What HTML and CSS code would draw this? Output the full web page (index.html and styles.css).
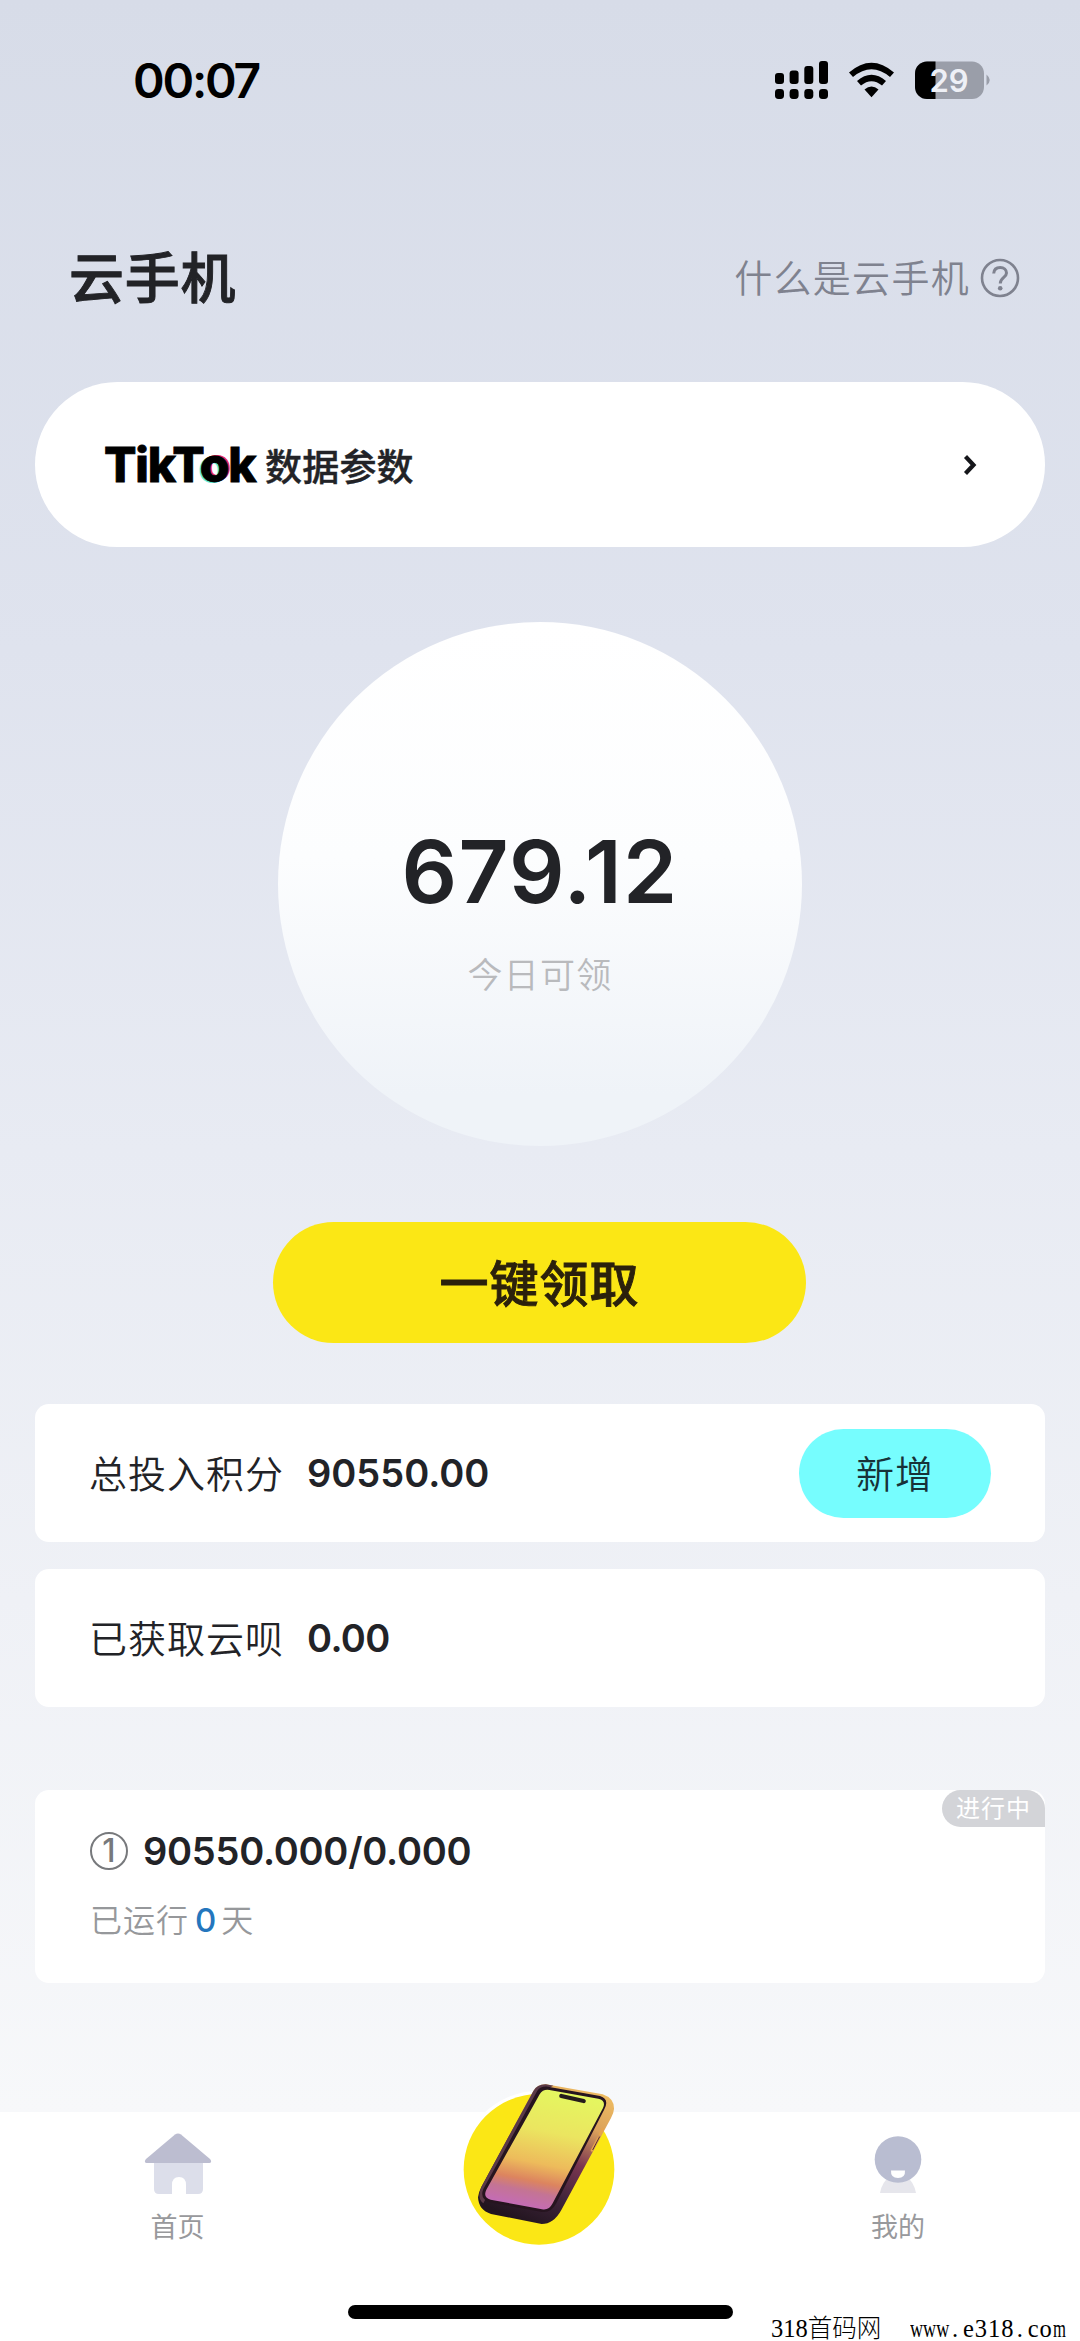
FILE: index.html
```html
<!DOCTYPE html>
<html lang="zh-CN">
<head>
<meta charset="UTF-8">
<title>云手机</title>
<link rel="stylesheet" href="styles.css">
</head>
<body>
<div class="screen">
  <header class="status">
    <span class="time">00:07</span>
    <svg class="status-icons" width="220" height="44" viewBox="0 0 220 44">
      <g>
        <rect x="0" y="13" width="9" height="11" rx="3"/><rect x="14.6" y="10.5" width="9" height="13.5" rx="3"/><rect x="29.3" y="6" width="9" height="18" rx="3"/><rect x="44" y="1" width="9" height="23" rx="3"/>
        <rect x="0" y="29" width="9" height="10" rx="3.4"/><rect x="14.6" y="29" width="9" height="10" rx="3.4"/><rect x="29.3" y="29" width="9" height="10" rx="3.4"/><rect x="44" y="29" width="9" height="10" rx="3.4"/>
      </g>
      <g>
        <path d="M74 12.5Q96.500 -7 119 12.500L115 17Q96.500 1.500 78 17Z"/>
        <path d="M82 21Q96.500 8.500 111 21L107 25.500Q96.500 17 86 25.500Z"/>
        <path d="M89.500 29.500Q96.500 23.500 103.500 29.500L96.500 37.300Z"/>
      </g>
      <clipPath id="charge"><rect x="140" y="0" width="20.500" height="40"/></clipPath>
      <rect x="140" y="1.500" width="69" height="37.500" rx="12" fill="#9a9ea9"/>
      <rect x="140" y="1.500" width="69" height="37.500" rx="12" clip-path="url(#charge)"/>
      <path d="M211.500 14.500Q218 20 211.500 25.500Z" fill="#9a9ea9"/>
      <text class="battery-text" x="174" y="32">29</text>
    </svg>
  </header>

  <div class="heading">
    <h1 class="title">云手机</h1>
    <div class="help">
      <span>什么是云手机</span>
      <svg width="40" height="40" viewBox="0 0 40 40" fill="none" stroke="#7f828f" stroke-width="2.600">
        <circle cx="20" cy="20" r="18"/>
        <path d="M13.700 15.500C14 11.500 16.500 9.500 20.200 9.500C24 9.500 26.500 12 26.500 15C26.500 19.500 20.300 19.500 20.300 25.500" stroke-width="3"/>
        <circle cx="20.200" cy="30.200" r="2.300" fill="#7f828f" stroke="none"/>
      </svg>
    </div>
  </div>

  <section class="entry">
    <span class="brand">TikT<span class="brand-o">o</span>k</span>
    <span class="entry-label">数据参数</span>
    <svg class="chevron" width="16" height="24" viewBox="0 0 16 24" fill="none" stroke="#15161a" stroke-width="4.200"><path d="M3.500 3.500L11.500 12L3.500 20.500"/></svg>
  </section>

  <section class="orb">
    <strong class="orb-value">679.12</strong>
    <span class="orb-label">今日可领</span>
  </section>

  <button class="claim">一键领取</button>

  <section class="row row-first">
    <span class="row-label">总投入积分</span><strong class="num">90550.00</strong>
    <button class="add">新增</button>
  </section>
  <section class="row row-second">
    <span class="row-label">已获取云呗</span><strong class="num">0.00</strong>
  </section>

  <section class="task">
    <span class="badge">进行中</span>
    <div class="task-head"><span class="index">1</span><strong class="num">90550.000/0.000</strong></div>
    <div class="task-run">已运行<span class="days">0</span>天</div>
  </section>

  <nav class="tabs">
    <div class="tab tab-home">
      <svg width="68" height="64" viewBox="0 0 68 64">
        <path d="M10 29H59V57Q59 62 54 62H42V53Q42 45 35 45Q28 45 28 53V62H15Q10 62 10 57Z" fill="#dcdeea"/>
        <path d="M31 2.500Q34 .5 37 2.500L66 27Q69 31 64 31H4Q-1 31 2 27Z" fill="#bcbdd0"/>
      </svg>
      <span>首页</span>
    </div>
    <div class="tab tab-mine">
      <svg width="60" height="64" viewBox="0 0 60 64">
        <path d="M12 61Q14 50 22 44H38Q46 50 48 61Z" fill="#e6e6ec"/>
        <circle cx="30" cy="27.500" r="23.300" fill="#b9bdd1"/>
        <path d="M23 38.500H37Q37.500 46 30 46Q22.500 46 23 38.500Z" fill="#fff"/>
      </svg>
      <span>我的</span>
    </div>
    <svg class="phone" width="240" height="220" viewBox="0 0 720 660">
      <defs>
        <linearGradient id="case" x1=".8" y1="0" x2=".35" y2="1"><stop offset="0" stop-color="#efbd62"/><stop offset=".25" stop-color="#dba15b"/><stop offset=".5" stop-color="#7b3650"/><stop offset=".75" stop-color="#40243b"/><stop offset="1" stop-color="#22151f"/></linearGradient>
        <linearGradient id="edge" x1="0" y1="0" x2="1" y2="0"><stop offset="0" stop-color="#674052"/><stop offset=".45" stop-color="#6b4e55"/><stop offset="1" stop-color="#f0ca70"/></linearGradient>
        <linearGradient id="glass" x1=".6" y1="0" x2=".4" y2="1"><stop offset="0" stop-color="#e4f760"/><stop offset=".35" stop-color="#ebe560"/><stop offset=".62" stop-color="#edbb5b"/><stop offset=".77" stop-color="#dc845f"/><stop offset=".86" stop-color="#c47494"/><stop offset="1" stop-color="#c46bb8"/></linearGradient>
      </defs>
      <circle cx="357" cy="328" r="236" fill="#fff"/>
      <circle cx="357" cy="328" r="226" fill="#fbe715"/>
      <path d="M340 93Q352 72 378 73L548 103Q583 115 582 147Q581 160 573 174L424 450Q401 492 365 492L213 462Q176 451 174 412Q176 396 184 381Z" fill="url(#case)"/>
      <path d="M184 381L340 93Q352 72 378 73L400 77L365 95L190 430Q170 415 184 381Z" fill="#5b3a48"/>
      <path d="M352 92Q362 78 384 80L540 108Q570 117 552 150L408 431Q393 460 362 455L210 427Q178 417 190 387Z" fill="#26141f"/>
      <path d="M359 103Q369 87 388 90L535 116Q559 122 549 144L398 430Q387 452 366 448L212 419Q188 413 199 389Z" fill="url(#glass)"/>
      <path d="M424 108L491 123" stroke="#251b1c" stroke-width="13" stroke-linecap="round"/>
      <path d="M548 207L540 223M535 235L516 271" stroke="#e7a34e" stroke-width="8" stroke-linecap="round"/>
      <path d="M539 230L518 270" stroke="#572f35" stroke-width="3"/>
    </svg>
    <div class="home-bar"></div>
    <div class="watermark"><span class="wm-a">318首码网</span><span class="wm-w">www</span><span class="wm-dot">.</span><span class="wm-b">e318</span><span class="wm-dot">.</span><span class="wm-b">co</span><span class="wm-m">m</span></div>
  </nav>
</div>
</body>
</html>
```
FILE: styles.css
```css
* { box-sizing: border-box; }
body {
  margin: 0;
  font-family: Inter, "Noto Sans CJK SC", sans-serif;
  color: #222327;
}
button { border: 0; padding: 0; font-family: inherit; color: inherit; }
.screen {
  width: 1080px;
  height: 2341px;
  display: flex;
  flex-direction: column;
  overflow: hidden;
  background: linear-gradient(#d7dce8 0, #dfe3ee 650px, #e8ebf3 1150px, #eff1f6 1600px, #f7f8fa 2112px);
}
.status {
  height: 160px;
  padding: 60px 85px 0 133px;
  display: flex;
  justify-content: space-between;
  align-items: flex-start;
}
.time {
  font-size: 48px;
  line-height: 42px;
  font-weight: 600;
  letter-spacing: -2.2px;
  color: #000;
}
.battery-text {
  fill: #eef0f6;
  font-size: 31px;
  font-weight: 600;
  text-anchor: middle;
}
.heading {
  height: 222px;
  padding: 0 60px 0 69px;
  display: flex;
  justify-content: space-between;
}
.title {
  margin: 78px 0 0;
  font-size: 55px;
  line-height: 80px;
  font-weight: 500;
  letter-spacing: 0.700px;
  -webkit-text-stroke: 0.900px currentColor;
}
.help {
  margin-top: 88px;
  height: 60px;
  display: flex;
  align-items: center;
  gap: 10px;
  font-size: 38px;
  line-height: 60px;
  letter-spacing: 1.3px;
  font-weight: 350;
  color: #7f828f;
}
.entry {
  width: 1010px;
  height: 165px;
  margin-left: 35px;
  padding: 0 67px 0 69px;
  border-radius: 83px;
  background: #fff;
  display: flex;
  align-items: center;
  flex-shrink: 0;
}
.brand {
  width: 161px;
  font-size: 48px;
  font-weight: 800;
  letter-spacing: -1.2px;
  color: #000;
  -webkit-text-stroke: 0.800px currentColor;
  white-space: nowrap;
}
.brand-o { text-shadow: -2px 1px 0 #5deadb, 2px -1px 0 #e92a5c; }
.entry-label {
  font-size: 37px;
  font-weight: 500;
  letter-spacing: 0.200px;
  -webkit-text-stroke: 0.400px currentColor;
}
.chevron { margin-left: auto; }
.orb {
  width: 524px;
  height: 524px;
  margin: 75px 0 0 278px;
  border-radius: 50%;
  background: linear-gradient(#fff 0, #fcfdfe 45%, #eff3f8 90%);
  display: flex;
  flex-direction: column;
  align-items: center;
  flex-shrink: 0;
}
.orb-value {
  margin-top: 200px;
  font-size: 87px;
  line-height: 100px;
  font-weight: 600;
  letter-spacing: 1.300px;
}
.orb-label {
  margin-top: 27px;
  font-size: 35px;
  line-height: 52px;
  letter-spacing: 1.300px;
  font-weight: 350;
  color: #b9babd;
}
.claim {
  width: 533px;
  height: 121px;
  margin: 76px 0 0 273px;
  padding-bottom: 5px;
  border-radius: 61px;
  background: #fbe715;
  color: #2b210c;
  font-size: 49px;
  font-weight: 500;
  letter-spacing: 1px;
  -webkit-text-stroke: 0.900px currentColor;
  flex-shrink: 0;
}
.row {
  width: 1010px;
  height: 138px;
  margin-left: 35px;
  padding: 0 54px;
  border-radius: 14px;
  background: #fff;
  display: flex;
  align-items: center;
  flex-shrink: 0;
}
.row-first { margin-top: 61px; }
.row-second { margin-top: 27px; }
.row-label {
  width: 218px;
  padding-bottom: 4px;
  font-size: 38px;
  font-weight: 350;
  letter-spacing: 1px;
}
.num { font-size: 38px; line-height: 50px; font-weight: 600; }
.row-second .num { letter-spacing: -0.600px; }
.task .num { letter-spacing: -0.250px; }
.add {
  width: 192px;
  height: 89px;
  margin-left: auto;
  padding-bottom: 4px;
  border-radius: 45px;
  background: #76fdfe;
  color: #173238;
  font-size: 38px;
  font-weight: 350;
  letter-spacing: 1px;
}
.task {
  position: relative;
  width: 1010px;
  height: 193px;
  margin: 83px 0 0 35px;
  padding: 36px 55px 0;
  border-radius: 14px;
  background: #fff;
  flex-shrink: 0;
}
.badge {
  position: absolute;
  top: 0;
  right: 0;
  width: 103px;
  height: 37px;
  border-radius: 19px 19px 0 19px;
  background: #d3d4d8;
  color: #fff;
  font-size: 24px;
  line-height: 37px;
  letter-spacing: 1px;
  text-align: center;
}
.task-head { display: flex; align-items: center; gap: 15px; }
.index {
  width: 38px;
  height: 38px;
  border: 2px solid #77797c;
  border-radius: 50%;
  color: #77797c;
  font-size: 32px;
  line-height: 34px;
  font-weight: 500;
  text-align: center;
}
.task-run {
  margin-top: 20px;
  display: flex;
  font-size: 32px;
  line-height: 50px;
  letter-spacing: 1px;
  font-weight: 350;
  color: #96989b;
}
.days { margin: 0 5px 0 6px; font-size: 33px; font-weight: 450; letter-spacing: 0; color: #2476bd; transform: translateY(-1px); }
.tabs {
  position: relative;
  height: 229px;
  margin-top: auto;
  padding-top: 20px;
  background: #fff;
  display: flex;
  justify-content: space-between;
  flex-shrink: 0;
}
.tab {
  width: 355px;
  display: flex;
  flex-direction: column;
  align-items: center;
  font-size: 27px;
  line-height: 40px;
  color: #98999c;
}
.tab span { margin-top: 12px; }
.tab-mine { width: 364px; }
.phone { position: absolute; left: 420px; top: -52px; }
.home-bar {
  position: absolute;
  left: 348px;
  top: 193px;
  width: 385px;
  height: 14px;
  border-radius: 7px;
  background: #000;
}
.watermark {
  position: absolute;
  left: 771px;
  top: 201px;
  display: flex;
  font-family: "Liberation Serif", "Noto Sans CJK SC", serif;
  font-size: 24.500px;
  line-height: 32px;
  font-weight: 300;
  color: #000;
  white-space: nowrap;
}
.wm-a { width: 139px; }
.wm-w { width: 40px; transform: scaleX(0.740); transform-origin: 0 50%; }
.wm-dot { width: 13px; padding-left: 2px; }
.wm-b { letter-spacing: 1px; }
.wm-m { transform: scaleX(0.680); transform-origin: 0 50%; }
```
